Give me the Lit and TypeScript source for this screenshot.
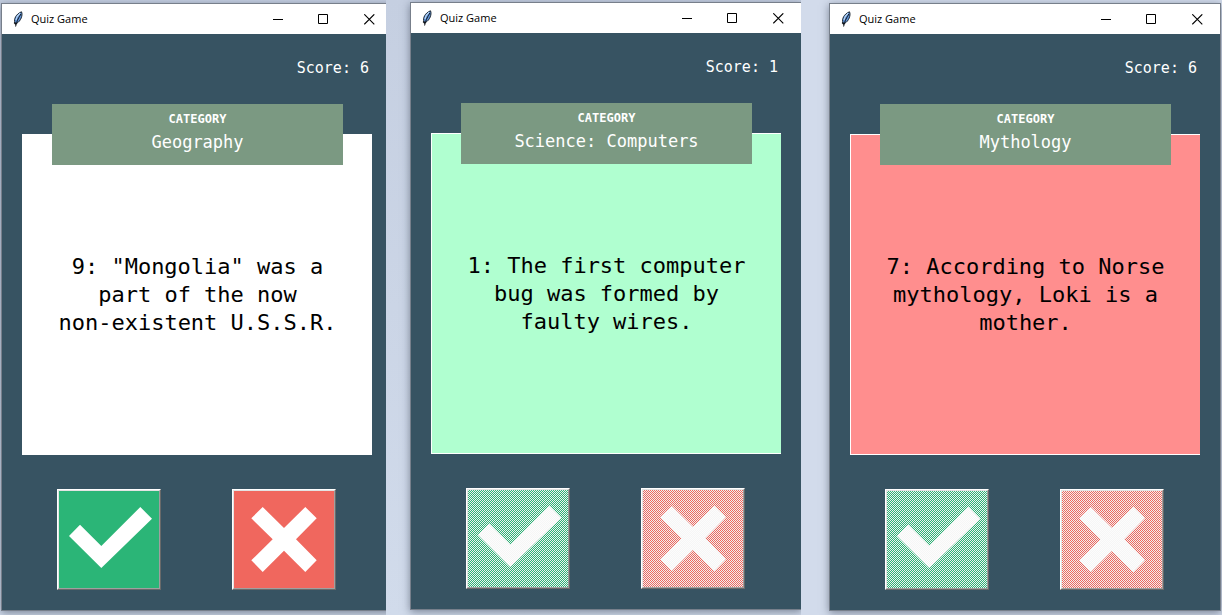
import { LitElement, html, css, svg } from "lit";
import { customElement, property } from "lit/decorators.js";

type Result = "none" | "right" | "wrong";

interface Round {
  id: string;
  score: number;
  category: string;
  question: string;
  result: Result;
}

const ROUNDS: Round[] = [
  { id: "first", score: 6, category: "Geography", question: '9: "Mongolia" was a part of the now non\u2011existent U.S.S.R.', result: "none" },
  { id: "second", score: 1, category: "Science: Computers", question: "1: The first computer bug was formed by faulty wires.", result: "right" },
  { id: "third", score: 6, category: "Mythology", question: "7: According to Norse mythology, Loki is a mother.", result: "wrong" },
];

const TICK = "10,45 21,33.7 42.3,54.9 81.3,16 93,27.7 42.3,77";
const CROSS = "17.3,27.3 28.7,16 50,37 71.3,16 82.7,27.3 62,48.3 82.7,69.3 71.3,81 50,59.7 28.7,81 17.3,69.3 38.7,48.3";

@customElement("answer-button")
export class AnswerButton extends LitElement {
  @property() kind: "true" | "false" = "true";
  @property({ type: Boolean }) disabled = false;

  static styles = css`
    :host { display: block; }
    .answer {
      display: block;
      padding: 0;
      margin: 0;
      background: none;
      border: 1px solid;
      border-color: #fff #696969 #696969 #fff;
    }
    .face {
      display: block;
      width: 100px;
      height: 97px;
      border: 1px solid;
      border-color: #e3e3e3 #a0a0a0 #a0a0a0 #e3e3e3;
    }
  `;

  render() {
    const yes = this.kind === "true";
    const shape = yes ? TICK : CROSS;
    return html`
      <button class="answer" aria-label=${yes ? "True" : "False"} ?disabled=${this.disabled}>
        <svg class="face" viewBox="0 0 100 97" aria-hidden="true">
          <defs>
            <pattern id="stipple" width="2" height="2" patternUnits="userSpaceOnUse">
              <path d="M0 0h1v1h-1zM1 1h1v1h-1z" fill="#f0f0f0" shape-rendering="crispEdges" />
            </pattern>
          </defs>
          <rect width="100" height="97" fill=${yes ? "#2bb577" : "#f0675e"} />
          <polygon points=${shape} fill="#fff" />
          ${this.disabled
            ? svg`<rect width="100" height="97" fill="url(#stipple)" />
                <polygon points=${shape} fill="#fafafa" fill-opacity="0.6" />`
            : ""}
        </svg>
      </button>
    `;
  }
}

@customElement("quiz-window")
export class QuizWindow extends LitElement {
  @property({ attribute: false }) round!: Round;

  static styles = css`
    :host { display: block; }
    .window {
      border: 1px solid #777f8b;
      box-shadow: 0 2px 8px rgba(40, 50, 70, 0.5);
      background: #375362;
    }
    .titlebar {
      display: flex;
      align-items: center;
      height: 30px;
      background: #fff;
      color: #000;
      font: 11px/16px "Open Sans", "Noto Sans", sans-serif;
    }
    .feather { width: 16px; height: 16px; margin: 0 5px 0 8px; }
    .title { flex: 1; }
    .control {
      width: 46px;
      height: 28px;
      padding: 0;
      border: 0;
      background: none;
      display: grid;
      place-items: center;
    }
    .glyph { width: 11px; height: 11px; fill: none; stroke: #000; }
    .body {
      display: flex;
      flex-direction: column;
      padding: 22px 20px 20px;
      font-family: "DejaVu Sans Mono", monospace;
    }
    .score {
      padding-right: 3px;
      text-align: right;
      color: #fff;
      font-size: 15px;
      line-height: 25px;
    }
    .category {
      position: relative;
      margin: 23px 29px -31px 30px;
      padding: 8px 0 11px;
      background: #7b9982;
      color: #fff;
      text-align: center;
    }
    .label { margin: 0 0 4px; font-size: 12px; font-weight: bold; line-height: 14px; }
    .name { margin: 0; font-size: 17px; font-weight: normal; line-height: 24px; }
    .card {
      display: flex;
      align-items: center;
      justify-content: center;
      box-sizing: border-box;
      min-height: 321px;
      padding: 0 30px;
      border: 1px solid #fff;
      border-right: 0;
      background: #fff;
    }
    .card.right { background: #b0ffd0; }
    .card.wrong { background: #ff8e8e; }
    .question { margin: 0; color: #000; text-align: center; font-size: 22px; line-height: 28px; }
    .answers {
      display: grid;
      grid-template-columns: 1fr 1fr;
      justify-items: center;
      padding-top: 34px;
      margin-right: 1px;
    }
  `;

  render() {
    const r = this.round;
    const locked = r.result !== "none";
    return html`
      <section class="window">
        <header class="titlebar">
          <svg class="feather" viewBox="0 0 16 16" aria-hidden="true">
            <path d="M5 12C3.5 8 6 3 11.5 .8C13 4 11 10 6.5 12.5Z" fill="#5d91d6" stroke="#1b2530" stroke-width="1" />
            <path d="M6 9C6.5 6 8 4 10 2.3" fill="none" stroke="#bcd8f6" stroke-width="1.2" />
            <path d="M11 3C9 6 7 9 5.6 15.5" fill="none" stroke="#0a0d12" stroke-width="1" />
            <path d="M4.2 11.5L6 13.5" stroke="#0a0d12" stroke-width="1.3" />
          </svg>
          <span class="title">Quiz Game</span>
          <button class="control" aria-label="Minimize">
            <svg class="glyph" viewBox="0 0 11 11"><path d="M1 5.5h10" /></svg>
          </button>
          <button class="control" aria-label="Maximize">
            <svg class="glyph" viewBox="0 0 11 11"><path d="M.5 .5h9v9h-9z" /></svg>
          </button>
          <button class="control" aria-label="Close">
            <svg class="glyph" viewBox="0 0 11 11"><path d="M.3 .3l10 10M10.3 .3l-10 10" stroke-width="1.1" /></svg>
          </button>
        </header>
        <div class="body">
          <div class="score">Score: ${r.score}</div>
          <div class="category">
            <p class="label">CATEGORY</p>
            <h2 class="name">${r.category}</h2>
          </div>
          <div class="card ${r.result}"><p class="question">${r.question}</p></div>
          <div class="answers">
            <answer-button kind="true" ?disabled=${locked}></answer-button>
            <answer-button kind="false" ?disabled=${locked}></answer-button>
          </div>
        </div>
      </section>
    `;
  }
}

@customElement("app-root")
export class AppRoot extends LitElement {
  static styles = css`
    :host { display: block; }
    .gallery {
      display: grid;
      grid-template-columns: 386fr 415fr 421fr;
      height: 100vh;
      overflow: hidden;
    }
    .shot { overflow: hidden; min-width: 0; background: linear-gradient(#c5cfe1, #d1dbeb); }
    .first { padding: 3px 0 0 1px; }
    .second { padding: 2px 0 0 24px; }
    .third { padding: 3px 1px 0 28px; background: #d2dbeb; }
    .first .pane { margin-right: -7px; }
    .second .pane { margin-right: -1px; }
  `;

  render() {
    return html`
      <main class="gallery">
        ${ROUNDS.map((r) => html`
          <div class="shot ${r.id}"><quiz-window class="pane" .round=${r}></quiz-window></div>
        `)}
      </main>
    `;
  }
}
